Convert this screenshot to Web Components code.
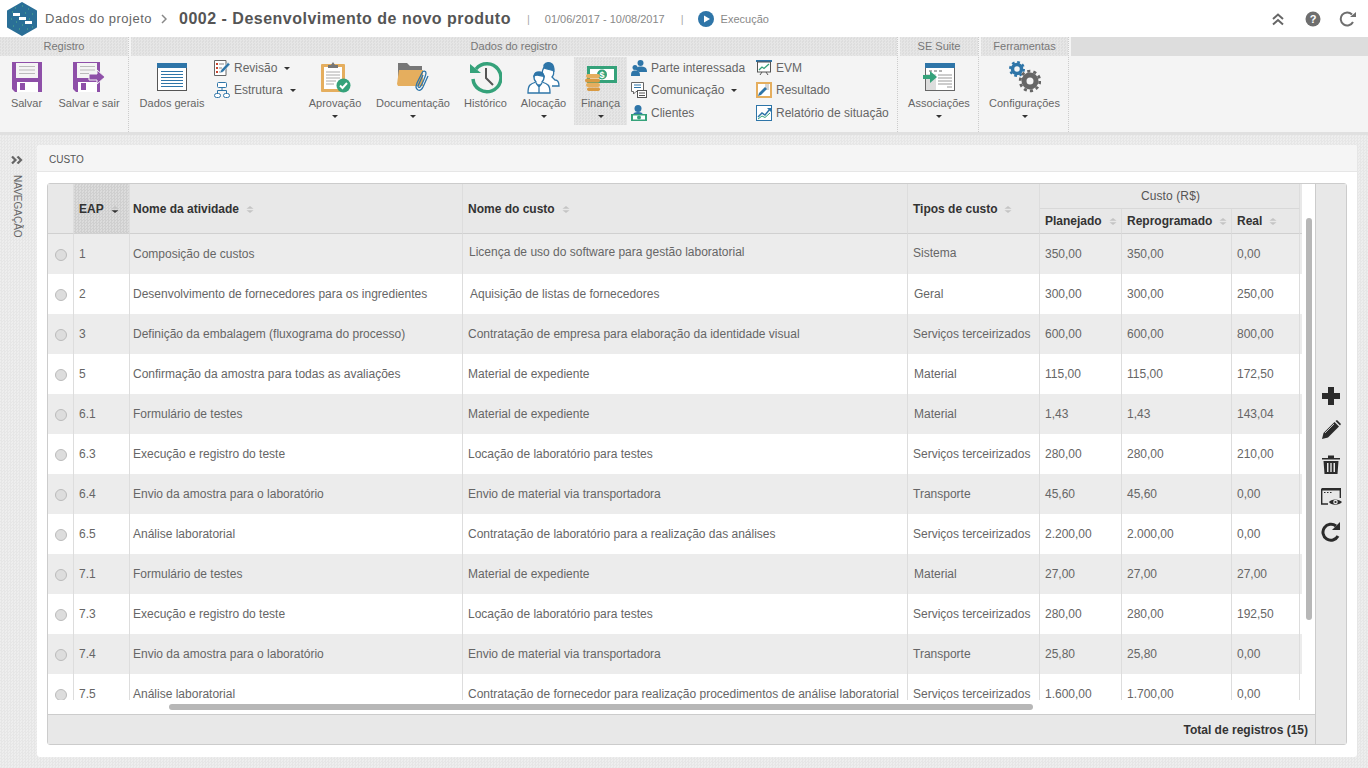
<!DOCTYPE html>
<html lang="pt-BR">
<head>
<meta charset="utf-8">
<title>Dados do projeto</title>
<style>
  html, body { margin: 0; height: 100%; overflow: hidden; }
  body {
    font-family: "Liberation Sans", Arial, sans-serif;
    font-size: 12px;
    color: #666;
    display: flex;
    flex-direction: column;
    width: 1368px;
    height: 768px;
  }
  svg { display: block; }
</style>
</head>
<body>

<project-header></project-header>

<ribbon-bar>
  <ribbon-group label="Registro" width="129">
    <ribbon-button label="Salvar" width="53">
      <svg width="30" height="30" viewBox="0 0 30 30"><path d="M0 0H30V30H3L0 27Z" fill="#8e4fa8"/><rect x="4" y="1" width="22" height="15" fill="#f4f4f4"/><path d="M7 4.500H23M7 8H23M7 11.500H23" stroke="#bbb"/><rect x="5" y="20" width="21" height="10" fill="#fff"/><rect x="8" y="21" width="5" height="7" fill="#8e4fa8"/></svg>
    </ribbon-button>
    <ribbon-button label="Salvar e sair" width="72">
      <svg width="32" height="30" viewBox="0 0 32 30"><path d="M0 0H27V30H3L0 27Z" fill="#8e4fa8"/><rect x="4" y="1" width="20" height="15" fill="#f4f4f4"/><path d="M7 4.500H22M7 8H22M7 11.500H16" stroke="#bbb"/><rect x="5" y="20" width="19" height="10" fill="#fff"/><rect x="8" y="21" width="5" height="7" fill="#8e4fa8"/><path d="M16 12H24V8L32 15L24 22V18H16Z" fill="#8e4fa8" stroke="#f4f4f4"/></svg>
    </ribbon-button>
  </ribbon-group>

  <ribbon-group label="Dados do registro" width="769" tab-gap="2">
    <ribbon-button label="Dados gerais" width="80" offset="3">
      <svg width="30" height="28" viewBox="0 0 30 28"><rect x=".5" y=".5" width="29" height="27" fill="#fff" stroke="#555"/><rect width="30" height="5" fill="#2e75a8"/><path d="M4 8.500H26M4 11.500H26M4 14.500H26M4 17.500H26M4 20.500H26M4 23.500H26" stroke="#2e75a8" stroke-width="1.200"/></svg>
    </ribbon-button>
    <ribbon-column width="91" margin="2">
      <ribbon-link label="Revisão" caret>
        <svg width="16" height="16" viewBox="0 0 16 16"><path d="M.5 .5H12V15.500H.5Z" fill="#fff" stroke="#666"/><path d="M2 3H4V5H2ZM2 7H4V9H2ZM2 11H4V13H2Z" fill="#c8452f"/><path d="M5 4H10M5 8H8M5 12H7" stroke="#888"/><path d="M6 13L7 10L14 2.500L16 4.500L9 12Z" fill="#2e75a8" stroke="#f4f4f4" stroke-width=".5"/></svg>
      </ribbon-link>
      <ribbon-link label="Estrutura" caret>
        <svg width="16" height="16" viewBox="0 0 16 16" fill="#fff" stroke="#2e75a8"><rect x="3.500" y=".5" width="9" height="5" rx="1"/><rect x=".5" y="11.500" width="6" height="4" rx="2"/><rect x="9.500" y="11.500" width="6" height="4" rx="2"/><path d="M8 5.500V8.500M3.500 11.500V8.500H12.500V11.500" fill="none"/></svg>
      </ribbon-link>
    </ribbon-column>
    <ribbon-button label="Aprovação" width="60" caret>
      <svg width="30" height="31" viewBox="0 0 30 31" style="margin-left:2px"><rect y="2" width="24" height="28" rx="1" fill="#e5ae5e"/><rect x="3" y="5" width="18" height="22" fill="#fff"/><path d="M5 10H19M5 13H19M5 16H19M5 19H15M5 22H13" stroke="#aaa"/><path d="M7 6V3H10L12 0L14 3H17V6Z" fill="#777"/><circle cx="22.500" cy="23.500" r="7" fill="#35a27a"/><path d="M19 23.500L21.500 26L26 21" fill="none" stroke="#fff" stroke-width="2"/></svg>
    </ribbon-button>
    <ribbon-button label="Documentação" width="90" offset="3" caret>
      <svg width="32" height="30" viewBox="0 0 32 30"><path d="M1 22V1H10L13 4H25V10H4Z" fill="#777"/><path d="M0 22L2 8H26V24H1Z" fill="#e5ae5e"/><path d="M21 28C18 26 19 24 20 21L25 11C26 8 29 9 29 11C29 13 25 23 23 25C22 26 21 25 21 24L26 13" fill="none" stroke="#2e75a8" stroke-width="1.300"/><path d="M21 28C23 29 25 27 26 25L31 14" fill="none" stroke="#2e75a8" stroke-width="1.300"/></svg>
    </ribbon-button>
    <ribbon-button label="Histórico" width="55">
      <svg width="33" height="33" viewBox="0 0 33 33"><path d="M7 8A14 14 0 1 1 4 18" fill="none" stroke="#35a27a" stroke-width="3.500"/><path d="M1 3L12 12H1Z" fill="#35a27a"/><path d="M17 7V17L24 24" fill="none" stroke="#555" stroke-width="2"/></svg>
    </ribbon-button>
    <ribbon-button label="Alocação" width="61" caret>
      <svg width="33" height="33" viewBox="0 0 33 33" fill="#fff" stroke="#2e75a8" stroke-width="1.300"><path d="M15 19L17 16C14 13 15 5 21 5C27 5 28 13 25 16L28 19C31 19 32 21 32 25H25"/><path d="M17 4C19 1 23 1 25 3C27 5 27 8 27 10C24 9 20 8 17 7Z" fill="#2e75a8"/><path d="M1 32C1 24 3 23 9 21C6 18 6 11 12 11C18 11 18 18 15 21C21 23 23 24 23 32Z"/><path d="M7 15C8 11 15 10 17 15C13 15 10 13 7 15Z" fill="#2e75a8"/><path d="M12 23V32M9 22L12 26L15 22"/></svg>
    </ribbon-button>
    <ribbon-button label="Finança" width="53" caret active>
      <svg width="32" height="26" viewBox="0 0 32 26" style="margin-top:4px"><rect x="2" y="0" width="30" height="17" fill="#35a27a"/><rect x="5" y="3" width="24" height="11" fill="#fff"/><circle cx="17" cy="8.500" r="5" fill="#35a27a"/><text x="17" y="12" font-family="Liberation Sans" font-size="9" font-weight="700" fill="#fff" text-anchor="middle">$</text><rect x="1" y="8" width="14" height="4" rx="2" fill="#e5ae5e"/><rect x="0" y="12.500" width="15" height="4" rx="2" fill="#d99a42"/><rect x="1" y="17" width="14" height="4" rx="2" fill="#e5ae5e"/><rect x="2" y="21.500" width="13" height="3.500" rx="1.700" fill="#d99a42"/></svg>
    </ribbon-button>
    <ribbon-column width="125" margin="4">
      <ribbon-link label="Parte interessada">
        <svg width="16" height="16" viewBox="0 0 16 16" fill="#2e75a8"><circle cx="9.500" cy="3" r="3"/><path d="M5 10C5 7 7 6.500 9.500 6.500C13 6.500 16 7 16 12H8Z"/><circle cx="4" cy="7.500" r="2.500"/><path d="M0 16C0 11 1.500 10.500 4 10.500C7 10.500 9 11 9 16Z"/></svg>
      </ribbon-link>
      <ribbon-link label="Comunicação" caret>
        <svg width="16" height="16" viewBox="0 0 16 16"><path d="M.5 .5H12.500V9.500H5L2.500 12V9.500H.5Z" fill="#fff" stroke="#666"/><path d="M3 3H10M3 5.500H10" stroke="#2e75a8"/><rect x="6.500" y="8.500" width="9" height="7" fill="#fff" stroke="#555"/><path d="M8 11H14M8 13.500H14" stroke="#555"/></svg>
      </ribbon-link>
      <ribbon-link label="Clientes">
        <svg width="16" height="16" viewBox="0 0 16 16"><circle cx="7" cy="3.500" r="3.500" fill="#2e75a8"/><path d="M2 10C2 8 4 7 7 7C10 7 12 8 12 10Z" fill="#2e75a8"/><rect x="0" y="9" width="16" height="7" fill="#35a27a"/><rect x="2" y="10.500" width="12" height="4" fill="#fff"/><circle cx="8" cy="12.500" r="2" fill="#35a27a"/></svg>
      </ribbon-link>
    </ribbon-column>
    <ribbon-column width="140">
      <ribbon-link label="EVM">
        <svg width="16" height="16" viewBox="0 0 16 16"><rect width="16" height="2" fill="#2e75a8"/><rect x="1.500" y="2" width="13" height="10" fill="#fff" stroke="#555"/><path d="M3 10L6 7L8 8.500L13 4" fill="none" stroke="#35a27a" stroke-width="1.300"/><path d="M4 15L6 12M12 15L10 12" stroke="#555"/></svg>
      </ribbon-link>
      <ribbon-link label="Resultado">
        <svg width="16" height="16" viewBox="0 0 16 16"><rect width="16" height="16" fill="#e5ae5e"/><rect x="2" y="2" width="12" height="12" fill="#fff"/><path d="M9 3H13M9 5H13M9 7H13" stroke="#aaa"/><path d="M2 14L3 11L9 5L11 7L5 13Z" fill="#2e75a8"/></svg>
      </ribbon-link>
      <ribbon-link label="Relatório de situação">
        <svg width="16" height="16" viewBox="0 0 16 16"><rect x=".5" y=".5" width="15" height="15" fill="#fff" stroke="#2e75a8"/><path d="M2 12L6 8L9 10L14 4" fill="none" stroke="#2e75a8" stroke-width="1.500"/><path d="M11 3H15V7Z" fill="#2e75a8"/><path d="M2 14L6 11L9 12.500L14 8" fill="none" stroke="#35a27a"/></svg>
      </ribbon-link>
    </ribbon-column>
  </ribbon-group>

  <ribbon-group label="SE Suite" width="81" tab-gap="2">
    <ribbon-button label="Associações" width="78" offset="2" caret>
      <svg width="32" height="28" viewBox="0 0 32 28"><rect x="2.500" y=".5" width="29" height="27" fill="#fff" stroke="#666"/><rect x="2" width="30" height="5" fill="#2e75a8"/><rect x="3" y="11" width="10" height="16" fill="#ddd"/><path d="M6 8H9M11 8H14M16 8H19" stroke="#666"/><path d="M15 12H29M15 15H29M15 18H29M15 21H29M24 24H29" stroke="#999"/><path d="M0 12H7V8L14 14L7 20V16H0Z" fill="#35a27a"/></svg>
    </ribbon-button>
  </ribbon-group>

  <ribbon-group label="Ferramentas" width="90" tab-gap="2">
    <ribbon-button label="Configurações" width="89" offset="1" caret>
      <svg width="32" height="32" viewBox="0 0 32 32" fill="none"><g stroke="#2e75a8"><circle cx="8" cy="8" r="4.500" stroke-width="3.500"/><circle cx="8" cy="8" r="6.800" stroke-width="2.400" stroke-dasharray="2.700 2.640"/></g><g stroke="#666"><circle cx="21" cy="20" r="6" stroke-width="5"/><circle cx="21" cy="20" r="9.800" stroke-width="2.800" stroke-dasharray="3.080 3.080"/></g></svg>
    </ribbon-button>
  </ribbon-group>
</ribbon-bar>

<main-area>
  <side-nav slot="nav"></side-nav>
  <cost-panel title-text="CUSTO">
    <cost-grid total="15">
      <grid-toolbar slot="tools"></grid-toolbar>
    </cost-grid>
  </cost-panel>
</main-area>

<script>
const dots = 'conic-gradient(#e6e6e6 25%, transparent 0 50%, #e6e6e6 0 75%, transparent 0) 0 0 / 3px 3px';

class ProjectHeader extends HTMLElement {
  constructor() {
    super();
    this.attachShadow({mode: 'open'}).innerHTML = `
      <style>
        :host { display: flex; align-items: center; height: 37px; flex: none; background: #fff; position: relative; color: #777; }
        .logo { margin-left: 7px; flex: none; }
        .crumb { margin-left: 8px; font-size: 13px; letter-spacing: .5px; color: #666; }
        .arrow { margin: 0 12px 0 9px; }
        h1 { margin: 0; font-size: 16px; font-weight: 700; color: #555; letter-spacing: .5px; }
        .sep { margin: 0 15px 0 16px; color: #aaa; font-size: 11px; }
        .dates, .status { font-size: 11px; color: #888; }
        .sep2 { margin: 0 14px 0 16px; color: #aaa; font-size: 11px; }
        .play { margin-right: 7px; }
        .tools { margin-left: auto; display: flex; margin-right: 11px; align-items: center; }
        .tools svg + svg { margin-left: 21px; }
        .tools svg:last-child { margin-left: 18px; }
      </style>
      <svg class="logo" width="30" height="34" viewBox="0 0 30 34">
        <path d="M15 1L29 9V25L15 33L1 25V9Z" fill="#2a6f97" stroke="#2a6f97" stroke-linejoin="round" stroke-width="2"/>
        <path d="M8 6H9M15 4H16M21 7H22M5 10H6M18 11H19M25 12H26M4 17H5M9 20H10M15 23H16M22 17H23M6 24H7M12 27H13M20 27H21M25 25H26" stroke="#55b586" stroke-width="1"/>
        <path d="M6 11H13V14H6ZM12 15H19V18H12ZM18 19H25V22H18Z" fill="#fff"/>
      </svg>
      <span class="crumb">Dados do projeto</span>
      <svg class="arrow" width="6" height="10" viewBox="0 0 6 10"><path d="M1 1L5 5L1 9" fill="none" stroke="#888" stroke-width="1.500"/></svg>
      <h1>0002 - Desenvolvimento de novo produto</h1>
      <span class="sep">|</span>
      <span class="dates">01/06/2017 - 10/08/2017</span>
      <span class="sep2">|</span>
      <svg class="play" width="16" height="16" viewBox="0 0 16 16"><circle cx="8" cy="8" r="8" fill="#2e75a8"/><path d="M6 4.500L12 8L6 11.500Z" fill="#fff"/></svg>
      <span class="status">Execução</span>
      <div class="tools">
        <svg width="12" height="14" viewBox="0 0 12 14" fill="none" stroke="#666" stroke-width="2"><path d="M1 7L6 2.500L11 7M1 12.500L6 8L11 12.500"/></svg>
        <svg width="16" height="16" viewBox="0 0 16 16"><circle cx="8" cy="8" r="7.500" fill="#6e6e6e"/><text x="8" y="12" font-family="Liberation Sans" font-size="11" font-weight="700" fill="#fff" text-anchor="middle">?</text></svg>
        <svg width="18" height="16" viewBox="0 0 18 16" fill="none"><path d="M14 11A6.500 6.500 0 1 1 13 3.500" stroke="#6e6e6e" stroke-width="2"/><path d="M11 6H17V1Z" fill="#6e6e6e"/></svg>
      </div>`;
  }
}
customElements.define('project-header', ProjectHeader);

class RibbonBar extends HTMLElement {
  constructor() {
    super();
    this.attachShadow({mode: 'open'}).innerHTML = `
      <style>
        :host { display: flex; flex: none; height: 98px; box-sizing: border-box; background: linear-gradient(#ddd 19px, #f4f4f4 19px); border-bottom: 3px solid #e0e0e0; }
        .gap { width: 2px; height: 19px; background: #f4f4f4; }
      </style>
      <slot></slot><div class="gap"></div>`;
  }
}
customElements.define('ribbon-bar', RibbonBar);

class RibbonGroup extends HTMLElement {
  constructor() {
    super();
    this.attachShadow({mode: 'open'}).innerHTML = `
      <style>
        :host { display: flex; flex-direction: column; flex: none; box-sizing: border-box; border-right: 1px dotted #ccc; height: 95px; background: #f4f4f4; }
        .tab { height: 19px; line-height: 18px; text-align: center; font-size: 11px; color: #777; flex: none; background: ${dots}, #ddd; }
        .body { display: flex; flex: 1; }
      </style>
      <div class="tab"></div>
      <div class="body"><slot></slot></div>`;
  }
  connectedCallback() {
    const tab = this.shadowRoot.querySelector('.tab');
    tab.textContent = this.getAttribute('label');
    tab.style.marginLeft = (this.getAttribute('tab-gap') || 0) + 'px';
    this.style.width = this.getAttribute('width') + 'px';
  }
}
customElements.define('ribbon-group', RibbonGroup);

class RibbonButton extends HTMLElement {
  constructor() {
    super();
    this.attachShadow({mode: 'open'}).innerHTML = `
      <style>
        :host { display: flex; flex-direction: column; align-items: center; flex: none; box-sizing: border-box; height: 68px; margin-top: 1px; color: #666; font-size: 11px; white-space: nowrap; }
        :host([active]) { background: ${dots}, #ddd; }
        .icon { height: 36px; display: flex; align-items: center; justify-content: center; margin-top: 2px; }
        .label { margin-top: 1px; line-height: 14px; }
        .caret { width: 0; height: 0; border: 3px solid transparent; border-top: 3px solid #333; border-bottom: 0; margin-top: 5px; display: none; }
        :host([caret]) .caret { display: block; }
      </style>
      <div class="icon"><slot></slot></div>
      <div class="label"></div>
      <div class="caret"></div>`;
  }
  connectedCallback() {
    this.shadowRoot.querySelector('.label').textContent = this.getAttribute('label');
    this.style.width = this.getAttribute('width') + 'px';
    if (this.hasAttribute('offset')) this.style.marginLeft = this.getAttribute('offset') + 'px';
  }
}
customElements.define('ribbon-button', RibbonButton);

class RibbonColumn extends HTMLElement {
  constructor() {
    super();
    this.attachShadow({mode: 'open'}).innerHTML = `
      <style>
        :host { display: flex; flex-direction: column; flex: none; gap: 6px; padding-top: 4px; box-sizing: border-box; }
        ::slotted(:nth-child(3)) { margin-top: 1px; }
      </style>
      <slot></slot>`;
  }
  connectedCallback() {
    this.style.width = this.getAttribute('width') + 'px';
    if (this.hasAttribute('margin')) this.style.marginLeft = this.getAttribute('margin') + 'px';
  }
}
customElements.define('ribbon-column', RibbonColumn);

class RibbonLink extends HTMLElement {
  constructor() {
    super();
    this.attachShadow({mode: 'open'}).innerHTML = `
      <style>
        :host { display: flex; align-items: center; height: 16px; color: #666; font-size: 12px; white-space: nowrap; }
        .label { margin-left: 4px; }
        .caret { display: none; width: 0; height: 0; border: 3px solid transparent; border-top: 3px solid #333; border-bottom: 0; margin-left: 7px; }
        :host([caret]) .caret { display: block; }
      </style>
      <slot></slot><span class="label"></span><span class="caret"></span>`;
  }
  connectedCallback() {
    this.shadowRoot.querySelector('.label').textContent = this.getAttribute('label');
  }
}
customElements.define('ribbon-link', RibbonLink);

class MainArea extends HTMLElement {
  constructor() {
    super();
    this.attachShadow({mode: 'open'}).innerHTML = `
      <style>
        :host { display: flex; flex: 1; min-height: 0; background: ${dots}, #eee; }
      </style>
      <slot name="nav"></slot><slot></slot>`;
  }
}
customElements.define('main-area', MainArea);

class SideNav extends HTMLElement {
  constructor() {
    super();
    this.attachShadow({mode: 'open'}).innerHTML = `
      <style>
        :host { display: flex; flex-direction: column; align-items: center; width: 37px; flex: none; box-sizing: border-box; padding: 21px 3px 0 0; color: #666; }
        .label { writing-mode: vertical-rl; font-size: 10px; margin-top: 11px; line-height: 12px; }
      </style>
      <svg width="12" height="8" viewBox="0 0 12 8" fill="none" stroke="#666" stroke-width="2.200"><path d="M1 .5L4.500 4L1 7.500M6.500 .5L10 4L6.500 7.500"/></svg>
      <div class="label">NAVEGAÇÃO</div>`;
  }
}
customElements.define('side-nav', SideNav);

class CostPanel extends HTMLElement {
  constructor() {
    super();
    this.attachShadow({mode: 'open'}).innerHTML = `
      <style>
        :host { display: flex; flex-direction: column; flex: 1; min-width: 0; margin: 10px 11px 11px 0; background: #fff; border-radius: 3px; }
        .head { height: 27px; box-sizing: border-box; line-height: 29px; padding-left: 12px; font-size: 10px; color: #555; background: #f5f5f5; border-bottom: 1px solid #e6e6e6; border-radius: 3px 3px 0 0; flex: none; }
        .body { flex: 1; min-height: 0; display: flex; padding: 11px 10px 12px; }
      </style>
      <div class="head"></div>
      <div class="body"><slot></slot></div>`;
  }
  connectedCallback() {
    this.shadowRoot.querySelector('.head').textContent = this.getAttribute('title-text');
  }
}
customElements.define('cost-panel', CostPanel);

class GridToolbar extends HTMLElement {
  constructor() {
    super();
    this.attachShadow({mode: 'open'}).innerHTML = `
      <style>
        :host { display: flex; flex-direction: column; align-items: center; justify-content: center; gap: 14px; height: 100%; }
      </style>
      <svg width="20" height="20" viewBox="0 0 20 20"><path d="M7 1H13V7H19V13H13V19H7V13H1V7H7Z" fill="#2b2b2b"/></svg>
      <svg width="20" height="20" viewBox="0 0 20 20" fill="#2b2b2b"><path d="M1 19L2.500 13L13.500 2L18 6.500L7 17.500Z"/><path d="M14.500 1L16 0L20 4L19 5.500Z"/><path d="M4 13L13 4" stroke="#e8e8e8" stroke-width=".8"/></svg>
      <svg width="20" height="20" viewBox="0 0 20 20" fill="#2b2b2b"><path d="M1 4H7V1.500H13V4H19V5.500H1Z"/><path d="M2.500 7H17.500L16.500 20H3.500ZM6 9V18H7.500V9ZM9.300 9V18H10.700V9ZM12.500 9V18H14V9Z" fill-rule="evenodd"/></svg>
      <svg width="21" height="20" viewBox="0 0 21 20"><path d="M.7 .7H19.300V10M7 16H.7V.7" fill="none" stroke="#2b2b2b" stroke-width="1.400"/><path d="M1 1H19V2.500H1Z" fill="#2b2b2b"/><path d="M3 4.500H4.500M6 4.500H7.500M9 4.500H10.500" stroke="#2b2b2b"/><path d="M8 14C10 10.500 18 10.500 21 14C18 17.500 10 17.500 8 14Z" fill="#2b2b2b"/><circle cx="14.500" cy="14" r="2.300" fill="#e8e8e8"/><circle cx="14.500" cy="14" r="1.100" fill="#2b2b2b"/></svg>
      <svg width="20" height="20" viewBox="0 0 20 20" fill="none"><path d="M17 14A8 8 0 1 1 15 4" stroke="#2b2b2b" stroke-width="3"/><path d="M11 8H19V0Z" fill="#2b2b2b"/></svg>`;
  }
}
customElements.define('grid-toolbar', GridToolbar);

const costRows = [
  ['1', 'Composição de custos', 'Licença de uso do software para gestão laboratorial', 'Sistema', '350,00', '350,00', '0,00'],
  ['2', 'Desenvolvimento de fornecedores para os ingredientes', 'Aquisição de listas de fornecedores', 'Geral', '300,00', '300,00', '250,00'],
  ['3', 'Definição da embalagem (fluxograma do processo)', 'Contratação de empresa para elaboração da identidade visual', 'Serviços terceirizados', '600,00', '600,00', '800,00'],
  ['5', 'Confirmação da amostra para todas as avaliações', 'Material de expediente', 'Material', '115,00', '115,00', '172,50'],
  ['6.1', 'Formulário de testes', 'Material de expediente', 'Material', '1,43', '1,43', '143,04'],
  ['6.3', 'Execução e registro do teste', 'Locação de laboratório para testes', 'Serviços terceirizados', '280,00', '280,00', '210,00'],
  ['6.4', 'Envio da amostra para o laboratório', 'Envio de material via transportadora', 'Transporte', '45,60', '45,60', '0,00'],
  ['6.5', 'Análise laboratorial', 'Contratação de laboratório para a realização das análises', 'Serviços terceirizados', '2.200,00', '2.000,00', '0,00'],
  ['7.1', 'Formulário de testes', 'Material de expediente', 'Material', '27,00', '27,00', '27,00'],
  ['7.3', 'Execução e registro do teste', 'Locação de laboratório para testes', 'Serviços terceirizados', '280,00', '280,00', '192,50'],
  ['7.4', 'Envio da amostra para o laboratório', 'Envio de material via transportadora', 'Transporte', '25,80', '25,80', '0,00'],
  ['7.5', 'Análise laboratorial', 'Contratação de fornecedor para realização procedimentos de análise laboratorial', 'Serviços terceirizados', '1.600,00', '1.700,00', '0,00']
];

// cells that sit a pixel or two off in the original, row:column
const cellPadding = {
  '0:2': 'padding:0 0 4px 6px', '0:3': 'padding-bottom:2px',
  '1:2': 'padding-left:7px', '1:3': 'padding-left:6px',
  '3:3': 'padding-left:6px', '4:3': 'padding-left:6px', '8:3': 'padding-left:6px'
};

const sortIcon = (on) => `<svg class="sort" width="8" height="9" viewBox="0 0 8 9"><path d="M4 1L7.500 3.700H.5Z" fill="#c4c4c4"/><path d="M4 8L7.500 5.300H.5Z" fill="${on ? '#333' : '#c4c4c4'}"/></svg>`;

class CostGrid extends HTMLElement {
  constructor() {
    super();
    this.attachShadow({mode: 'open'}).innerHTML = `
      <style>
        :host { display: flex; flex: 1; min-width: 0; box-sizing: border-box; border: 1px solid #ccc; border-radius: 3px; background: #fff; }
        .main { flex: 1; min-width: 0; display: flex; flex-direction: column; }
        .view { position: relative; flex: 1; min-height: 0; }
        .clip { height: 516px; overflow: hidden; }
        table { border-collapse: separate; border-spacing: 0; table-layout: fixed; width: 1254px; font-size: 12px; color: #666; }
        th { background: #e8e8e8; color: #333; font-weight: 700; text-align: left; padding: 0 0 0 5px; border-right: 1px solid #ddd; border-bottom: 1px solid #d0d0d0; white-space: nowrap; }
        th.sorted { background: ${dots.replace(/#e6e6e6/g, '#cfcfcf')}, #dcdcdc; }
        th.activity, td.activity { padding-left: 3px; }
        th.group { text-align: center; font-weight: 400; height: 24px; padding-left: 2px; color: #555; letter-spacing: .1px; border-bottom-color: #d8d8d8; }
        th.sub { height: 24px; }
        th .sort { display: inline-block; margin-left: 7px; vertical-align: -1px; }
        th.fill, td.fill { border-right: 0; padding: 0; }
        td { height: 40px; box-sizing: border-box; padding: 0 0 0 5px; border-right: 1px solid #ddd; white-space: nowrap; overflow: hidden; }
        tr:nth-child(odd) td { background: #ececec; }
        td.radio { padding: 0 0 0 7px; }
        td.radio i { display: block; width: 12px; height: 12px; box-sizing: border-box; border-radius: 50%; background: #ddd; border: 1px solid #bbb; margin-top: 2px; }
        .vbar { position: absolute; left: 1258px; top: 34px; width: 6px; height: 402px; border-radius: 3px; background: #b7b7b7; }
        .hbar { position: absolute; left: 121px; top: 520px; width: 864px; height: 6px; border-radius: 3px; background: #b7b7b7; }
        .foot { height: 30px; flex: none; box-sizing: border-box; background: #e8e8e8; border-top: 1px solid #ccc; text-align: right; line-height: 30px; padding-right: 7px; font-weight: 700; color: #333; font-size: 12px; }
        .tools { width: 31px; flex: none; background: #e8e8e8; border-left: 1px solid #ccc; box-sizing: border-box; }
      </style>
      <div class="main">
        <div class="view">
          <div class="clip">
            <table>
              <colgroup><col style="width:26px"><col style="width:56px"><col style="width:333px"><col style="width:445px"><col style="width:132px"><col style="width:82px"><col style="width:110px"><col style="width:68px"><col></colgroup>
              <thead>
                <tr>
                  <th rowspan="2"></th>
                  <th rowspan="2" class="sorted">EAP${sortIcon(true)}</th>
                  <th rowspan="2" class="activity">Nome da atividade${sortIcon()}</th>
                  <th rowspan="2">Nome do custo${sortIcon()}</th>
                  <th rowspan="2">Tipos de custo${sortIcon()}</th>
                  <th colspan="3" class="group">Custo (R$)</th>
                  <th rowspan="2" class="fill"></th>
                </tr>
                <tr>
                  <th class="sub">Planejado${sortIcon()}</th>
                  <th class="sub">Reprogramado${sortIcon()}</th>
                  <th class="sub">Real${sortIcon()}</th>
                </tr>
              </thead>
              <tbody></tbody>
            </table>
          </div>
          <div class="vbar"></div>
          <div class="hbar"></div>
        </div>
        <div class="foot"></div>
      </div>
      <div class="tools"><slot name="tools"></slot></div>`;
  }
  connectedCallback() {
    const body = this.shadowRoot.querySelector('tbody');
    body.innerHTML = costRows.map((r, i) =>
      `<tr><td class="radio"><i></i></td>${r.map((c, j) =>
        `<td${j === 1 ? ' class="activity"' : ''}${cellPadding[i + ':' + j] ? ` style="${cellPadding[i + ':' + j]}"` : ''}>${c}</td>`).join('')}<td class="fill"></td></tr>`).join('');
    this.shadowRoot.querySelector('.foot').textContent = `Total de registros (${this.getAttribute('total')})`;
  }
}
customElements.define('cost-grid', CostGrid);
</script>
</body>
</html>
